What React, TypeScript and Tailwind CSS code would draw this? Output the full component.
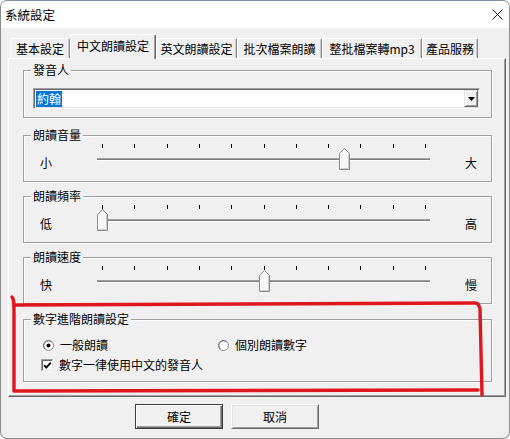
import React from "react";

const FONT = "font-['Noto_Sans_CJK_TC','Noto_Sans',sans-serif]";

const tabs = [
  { label: "基本設定", cls: "w-[60px]", selected: false },
  { label: "中文朗讀設定", cls: "w-[86px]", selected: true },
  { label: "英文朗讀設定", cls: "w-[81px]", selected: false },
  { label: "批次檔案朗讀", cls: "w-[85px]", selected: false },
  { label: "整批檔案轉mp3", cls: "w-[100px]", selected: false },
  { label: "產品服務", cls: "w-[56px]", selected: false },
];

function Tab({ label, cls, selected }: { label: string; cls: string; selected: boolean }) {
  if (selected) {
    return (
      <div
        className={`${cls} relative z-10 h-[25px] -mb-[1px] bg-[#f0f0f0] border-l border-t border-white border-r border-r-[#696969] rounded-t-[2px] shadow-[inset_-1px_0_0_#a0a0a0] flex justify-center pt-[4px] text-[12px] leading-[14px]`}
      >
        {label}
      </div>
    );
  }
  return (
    <div
      className={`${cls} h-[20px] bg-[#f0f0f0] border-l border-t border-white border-r border-r-[#8a8a8a] rounded-t-[2px] shadow-[inset_-1px_0_0_#c8c8c8] flex justify-center pt-[3px] text-[12px] leading-[14px]`}
    >
      {label}
    </div>
  );
}

function GroupBox({ title, cls, children }: { title: string; cls: string; children: React.ReactNode }) {
  return (
    <div className={`${cls} w-[469px] border border-[#a0a0a0] shadow-[inset_1px_1px_0_#ffffff,1px_1px_0_#ffffff]`}>
      <div className="-mt-[8px] ml-[7px] px-[2px] w-fit bg-[#f0f0f0] text-[12px] leading-[14px]">{title}</div>
      {children}
    </div>
  );
}

function Slider({ left }: { left: number }) {
  const ticks = Array.from({ length: 11 }, (_, i) => Math.round(5 + i * 32.3));
  const L = left;
  return (
    <svg width="333" height="39" className="block" shapeRendering="crispEdges">
      {ticks.map((t) => (
        <rect key={t} x={t} y={2} width={1} height={4} fill="#000" />
      ))}
      <rect x="0" y="16" width="333" height="1" fill="#a0a0a0" />
      <rect x="0" y="17" width="333" height="1" fill="#808080" />
      <rect x="0" y="18" width="333" height="1" fill="#ffffff" />
      <g shapeRendering="auto">
        <polygon
          points={`${L + 0.5},27.5 ${L + 0.5},11.5 ${L + 5.5},6.5 ${L + 10.5},11.5 ${L + 10.5},27.5`}
          fill="#f7f7f7"
          stroke="#8a8a8a"
          strokeWidth="1"
        />
        <polyline
          points={`${L + 1.5},26.5 ${L + 1.5},11.9 ${L + 5.5},7.9`}
          fill="none"
          stroke="#ffffff"
          strokeWidth="1"
        />
        <polyline
          points={`${L + 9.5},12 ${L + 9.5},26.5 ${L + 1.5},26.5`}
          fill="none"
          stroke="#c8c8c8"
          strokeWidth="1"
        />
      </g>
    </svg>
  );
}

function SliderGroup({ title, cls, low, high, left }: { title: string; cls: string; low: string; high: string; left: number }) {
  return (
    <GroupBox title={title} cls={cls}>
      <div className="flex h-[39px]">
        <div className="w-[73px] pl-[16px] pt-[14px] text-[12px] leading-[14px]">{low}</div>
        <Slider left={left} />
        <div className="pl-[35px] pt-[14px] text-[12px] leading-[14px]">{high}</div>
      </div>
    </GroupBox>
  );
}

function Radio({ checked }: { checked: boolean }) {
  return (
    <svg width="11" height="11" className="block shrink-0">
      <circle cx="5.5" cy="5.5" r="5" fill="#ffffff" stroke="#8a8a8a" strokeWidth="1" />
      <path d="M2.2 8.8 A4.6 4.6 0 0 1 8.8 2.2" fill="none" stroke="#5a5a5a" strokeWidth="0.8" />
      {checked && <circle cx="5.5" cy="5.5" r="2" fill="#000" />}
    </svg>
  );
}

function Checkbox() {
  return (
    <svg width="13" height="13" className="block shrink-0" shapeRendering="crispEdges">
      <rect x="0" y="0" width="13" height="13" fill="#ffffff" />
      <rect x="0" y="0" width="12" height="1" fill="#a0a0a0" />
      <rect x="0" y="0" width="1" height="12" fill="#a0a0a0" />
      <rect x="1" y="1" width="10" height="1" fill="#696969" />
      <rect x="1" y="1" width="1" height="10" fill="#696969" />
      <rect x="1" y="11" width="11" height="1" fill="#e3e3e3" />
      <rect x="11" y="1" width="1" height="11" fill="#e3e3e3" />
      <path d="M3.2 6.2 L5.3 8.6 L9.8 3.6" fill="none" stroke="#000" strokeWidth="1.8" shapeRendering="auto" />
    </svg>
  );
}

export default function App() {
  return (
    <div
      className={`${FONT} relative w-[510px] h-[439px] overflow-hidden bg-[#f0f0f0] text-black border border-[#8c8c8c] border-t-[#7d8fa3] rounded-[7px] flex flex-col`}
    >
      {/* Title bar */}
      <div className="h-[27px] shrink-0 bg-white flex items-center justify-between pl-[4px] pr-[6px]">
        <span className="text-[12.5px] leading-[14px]">系統設定</span>
        <svg width="11" height="11" className="block">
          <path d="M0.5 0.5 L10.5 10.5 M10.5 0.5 L0.5 10.5" stroke="#222" strokeWidth="1" fill="none" />
        </svg>
      </div>

      {/* Tabs */}
      <div className="mt-[6px] h-[24px] shrink-0 flex items-end pl-[9px]">
        {tabs.map((t) => (
          <Tab key={t.label} label={t.label} cls={t.cls} selected={t.selected} />
        ))}
      </div>

      {/* Panel */}
      <div className="ml-[7px] w-[498px] h-[339px] shrink-0 border-l border-t border-white border-r border-b border-r-[#696969] border-b-[#696969] shadow-[inset_-1px_-1px_0_#a0a0a0] flex flex-col pl-[14px]">
        <GroupBox title="發音人" cls="mt-[11px]">
          <div className="mt-[11px] mb-[8px] ml-[9px] w-[447px] h-[21px] bg-white border-t border-l border-[#a0a0a0] border-r border-b border-r-white border-b-white shadow-[inset_1px_1px_0_#696969,inset_-1px_-1px_0_#e3e3e3] flex items-center justify-between pl-[2px] pr-[1px]">
            <span className="bg-[#0078d7] text-white text-[12px] leading-[16px] px-[1px]">約翰</span>
            <div className="w-[14px] h-[17px] bg-[#f0f0f0] border-l border-t border-[#e3e3e3] border-r border-b border-r-[#696969] border-b-[#696969] shadow-[inset_1px_1px_0_#ffffff,inset_-1px_-1px_0_#a0a0a0] flex items-center justify-center">
              <svg width="7" height="4" className="block">
                <path d="M0 0 L7 0 L3.5 4 Z" fill="#000" />
              </svg>
            </div>
          </div>
        </GroupBox>

        <SliderGroup title="朗讀音量" cls="mt-[17px]" low="小" high="大" left={242} />
        <SliderGroup title="朗讀頻率" cls="mt-[14px]" low="低" high="高" left={0} />
        <SliderGroup title="朗讀速度" cls="mt-[14px]" low="快" high="慢" left={162} />

        <GroupBox title="數字進階朗讀設定" cls="mt-[15px]">
          <div className="mt-[12px] h-[14px] flex items-center text-[12px] leading-[14px]">
            <div className="w-[194px] pl-[19px] flex items-center gap-[6px]">
              <Radio checked={true} />
              <span>一般朗讀</span>
            </div>
            <div className="flex items-center gap-[6px]">
              <Radio checked={false} />
              <span>個別朗讀數字</span>
            </div>
          </div>
          <div className="mt-[6px] mb-[9px] h-[14px] pl-[17px] flex items-center gap-[5px] text-[12px] leading-[14px]">
            <Checkbox />
            <span>數字一律使用中文的發音人</span>
          </div>
        </GroupBox>
      </div>

      {/* Buttons */}
      <div className="mt-[7px] flex gap-[8px] pl-[134px]">
        <button className="w-[88px] h-[25px] bg-[#f0f0f0] border border-[#3c3c3c] shadow-[inset_1px_1px_0_#ffffff,inset_-1px_-1px_0_#696969,inset_-2px_-2px_0_#a0a0a0] text-[12px] leading-[14px]">
          確定
        </button>
        <button className="w-[88px] h-[25px] bg-[#f0f0f0] border-l border-t border-white border-r border-b border-r-[#696969] border-b-[#696969] shadow-[inset_1px_1px_0_#e3e3e3,inset_-1px_-1px_0_#a0a0a0] text-[12px] leading-[14px]">
          取消
        </button>
      </div>

      {/* Red hand-drawn annotation */}
      <svg className="absolute left-0 top-0 pointer-events-none" width="510" height="439">
        <g fill="none" stroke="#e0161e" strokeWidth="3.4" strokeLinecap="round" strokeLinejoin="round">
          <path d="M11 296 C 13 298, 13 302, 13 310 L 13 389" />
          <path d="M13 304 L 474 302 Q 478 302 479 308 L 481 394" />
          <path d="M13 390 L 477 389" />
        </g>
      </svg>
    </div>
  );
}
